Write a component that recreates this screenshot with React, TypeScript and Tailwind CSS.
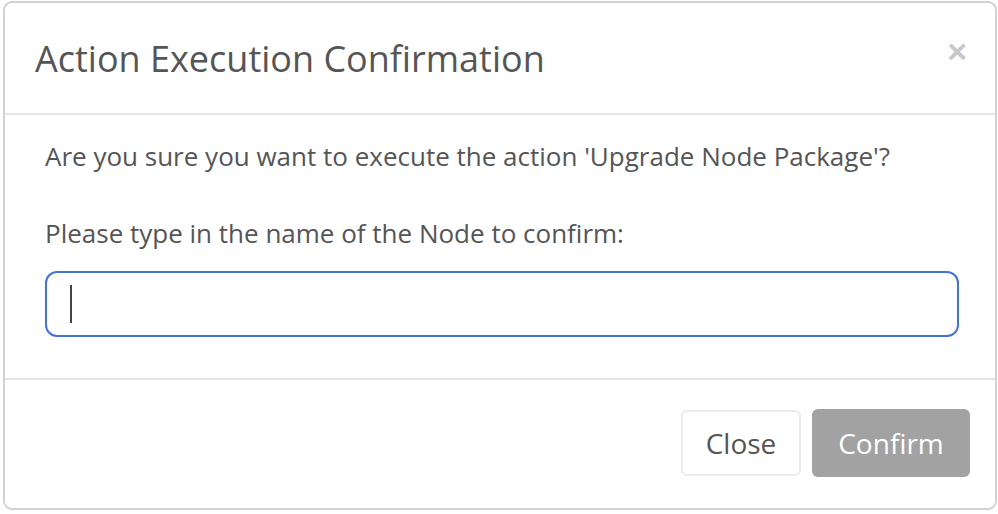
export default function App() {
  return (
    <main className="w-[998px] h-[514px] bg-white pl-[3px] pt-[1px] font-['Open_Sans',sans-serif] text-[#555]">
      <div className="w-[994px] h-[509px] border-2 border-[#d2d2d2] rounded-[9px] flex flex-col overflow-hidden">
        {/* header */}
        <div className="h-[112px] shrink-0 border-b-2 border-[#e5e5e5] flex items-center justify-between pl-[30px] pr-[28px]">
          <h3 className="text-[36px] leading-none pt-[1px]">Action Execution Confirmation</h3>
          <button className="font-['Liberation_Sans',sans-serif] font-bold text-[34px] leading-none text-[#c8c8c8] mb-[14px]">×</button>
        </div>

        {/* body */}
        <div className="h-[265px] shrink-0 border-b-2 border-[#e5e5e5] pl-[40px] pr-[36px] pt-[23px]">
          <p className="text-[26px] leading-[36px]">Are you sure you want to execute the action 'Upgrade Node Package'?</p>
          <p className="text-[26px] leading-[36px] mt-[41px]">Please type in the name of the Node to confirm:</p>
          <div className="mt-[20px] h-[66px] border-2 border-[#4472d8] rounded-[12px] flex items-center pl-[23px]">
            <div className="w-[2px] h-[38px] bg-[#444]" />
          </div>
        </div>

        {/* footer */}
        <div className="flex-1 flex justify-end items-start gap-[11px] pt-[30px] pr-[25px]">
          <button className="w-[120px] h-[66px] border-2 border-[#ececec] rounded-[6px] bg-white text-[28px] text-[#555]">Close</button>
          <button className="w-[158px] h-[68px] -mt-[1px] rounded-[6px] bg-[#a2a2a2] text-[28px] text-white">Confirm</button>
        </div>
      </div>
    </main>
  );
}
